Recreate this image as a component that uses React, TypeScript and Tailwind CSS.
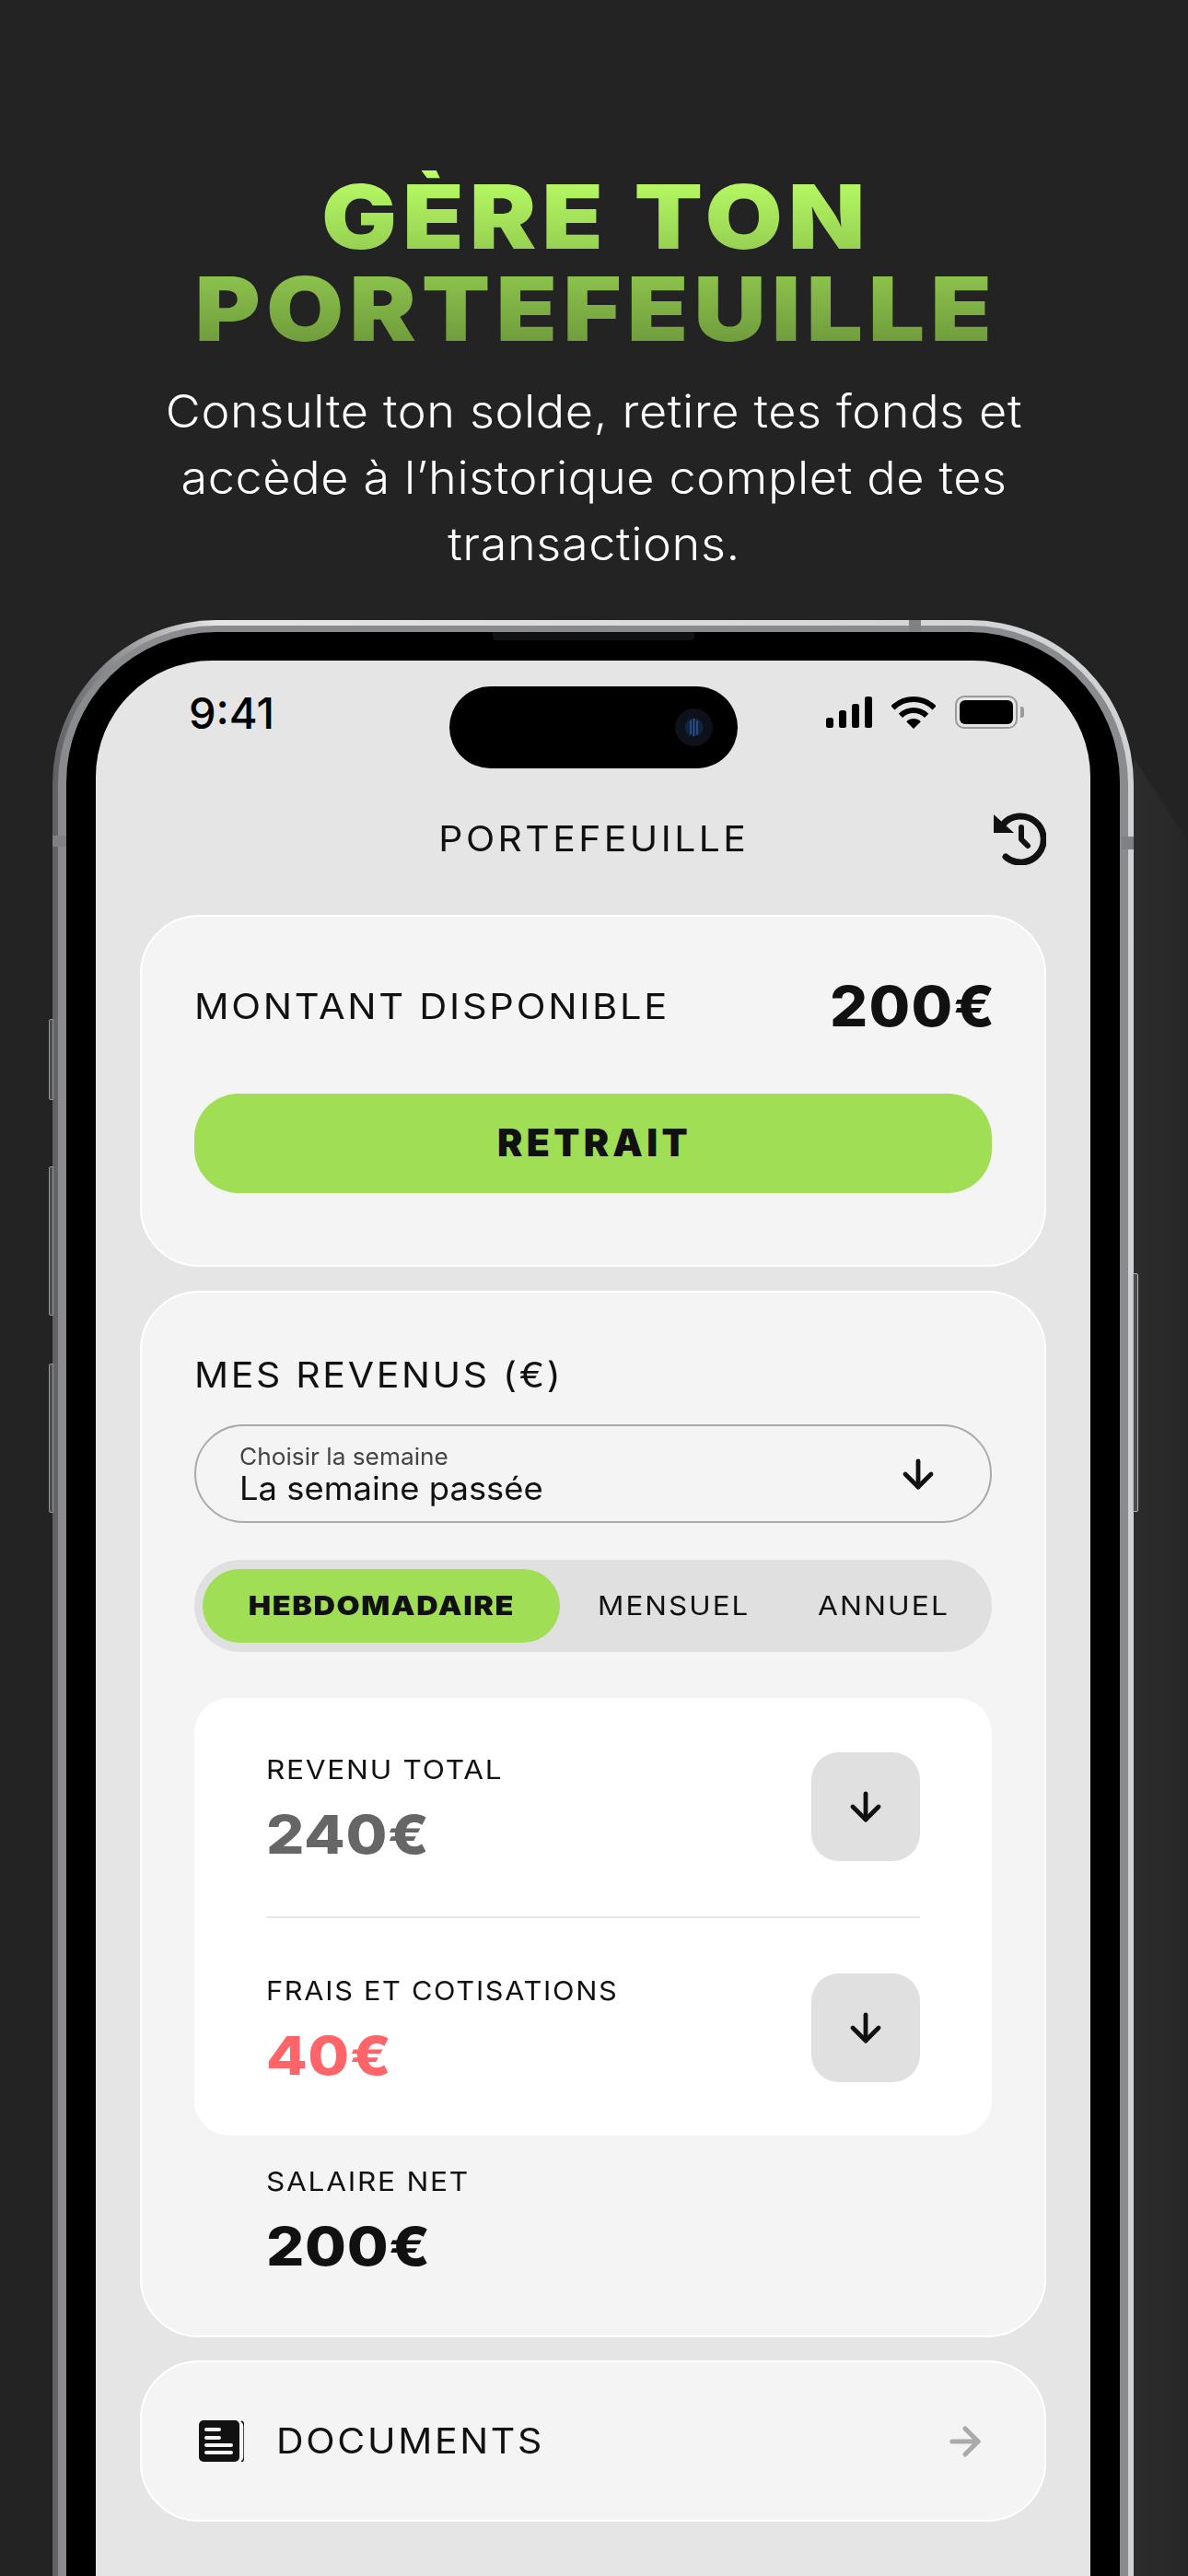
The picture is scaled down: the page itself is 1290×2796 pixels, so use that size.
import { ArrowDown, ArrowRight } from "lucide-react";

function SignalIcon() {
  return (
    <svg width="50" height="34" viewBox="0 0 50 34" fill="#000">
      <rect x="0" y="23" width="8" height="11" rx="2.5" />
      <rect x="14" y="15" width="8" height="19" rx="2.5" />
      <rect x="28" y="8" width="8" height="26" rx="2.5" />
      <rect x="42" y="0" width="8" height="34" rx="2.5" />
    </svg>
  );
}

function WifiIcon() {
  return (
    <svg width="48" height="36" viewBox="0 0 48 36" fill="none" stroke="#000" strokeWidth="6">
      <path d="M1.4 13.4A32 32 0 0 1 46.6 13.4" />
      <path d="M9.9 21.9A20 20 0 0 1 38.1 21.9" />
      <path d="M24 36L16.2 28.2A11 11 0 0 1 31.8 28.2Z" fill="#000" stroke="none" />
    </svg>
  );
}

function BatteryIcon() {
  return (
    <div className="flex items-center">
      <div className="flex h-[36px] w-[68px] items-center justify-center rounded-[10px] border-[2px] border-[#9a9a9a]">
        <div className="h-[26px] w-[58px] rounded-[6px] bg-black" />
      </div>
      <div className="ml-[3px] h-[12px] w-[4px] rounded-r-[3px] bg-[#9a9a9a]" />
    </div>
  );
}

function HistoryIcon() {
  return (
    <svg width="57" height="57" viewBox="0 0 57 57" fill="none" stroke="#111" strokeLinecap="round" strokeLinejoin="round">
      <path d="M10 13A25 25 0 1 1 13 48" strokeWidth="7" />
      <path d="M0 2V22H22Z" fill="#111" stroke="none" />
      <path d="M30 16V29L37 36" strokeWidth="6" />
    </svg>
  );
}

function DocumentIcon() {
  return (
    <svg width="49" height="45" viewBox="0 0 49 45">
      <path d="M46 1c2 1 3 3 3 5v34c0 2-1 4-3 5" fill="none" stroke="#111" strokeWidth="1.5" />
      <rect x="0" y="0" width="44" height="45" rx="5" fill="#111" />
      <rect x="6" y="8" width="18" height="4" rx="2" fill="#f4f4f4" />
      <rect x="6" y="17" width="18" height="4" rx="2" fill="#f4f4f4" />
      <rect x="6" y="25" width="31" height="4" rx="2" fill="#f4f4f4" />
      <rect x="6" y="33" width="31" height="4" rx="2" fill="#f4f4f4" />
    </svg>
  );
}

function AmountRow({ label, amount, color, labelScale }: { label: string; amount: string; color: string; labelScale: string }) {
  return (
    <div className="flex h-[118px] items-start justify-between">
      <div className="flex-1 pt-[4px]">
        <p className={`origin-left text-[29px] leading-[30px] tracking-[0.055em] text-[#111] ${labelScale}`}>{label}</p>
        <p className={`mt-[25px] origin-left scale-x-[1.12] text-[58px] font-extrabold leading-[60px] tracking-[0.01em] ${color}`}>{amount}</p>
      </div>
      <div className="flex h-[118px] w-[118px] items-center justify-center rounded-[30px] bg-[#e0e0e0]">
        <ArrowDown size={48} strokeWidth={2.4} color="#111" />
      </div>
    </div>
  );
}

export default function App() {
  return (
    <div className="flex h-[2796px] w-[1290px] flex-col overflow-hidden bg-[#232323] font-['Inter',sans-serif]">
      {/* Header */}
      <header className="pt-[185px] text-center">
        <h1 className="scale-x-[1.133] bg-linear-to-b from-[#baff66] to-[#6b963a] bg-clip-text pl-[4px] text-[96px] font-black leading-[100px] tracking-[0.055em] text-transparent">
          GÈRE TON
          <br />
          PORTEFEUILLE
        </h1>
        <p className="mt-[26px] scale-x-[1.065] text-[49px] font-light leading-[72px] tracking-[0.012em] text-white">
          Consulte ton solde, retire tes fonds et
          <br />
          accède à l’historique complet de tes
          <br />
          transactions.
        </p>
      </header>

      {/* Phone */}
      <div className="relative ml-[57px] mt-[46px] w-[1174px] flex-1">
        {/* glow on the right of the phone */}
        <div className="absolute bottom-0 left-full top-[150px] w-[59px] bg-linear-to-r from-[#2d2d2d] to-[#262626] [clip-path:polygon(0_0,100%_90px,100%_100%,0_100%)]" />

        {/* side buttons */}
        <div className="absolute left-[-4px] top-[433px] h-[88px] w-[5px] rounded-l-[2px] border border-[#9a9b9e] bg-[#4a4b4e]" />
        <div className="absolute left-[-4px] top-[593px] h-[162px] w-[5px] rounded-l-[2px] border border-[#9a9b9e] bg-[#4a4b4e]" />
        <div className="absolute left-[-4px] top-[807px] h-[162px] w-[5px] rounded-l-[2px] border border-[#9a9b9e] bg-[#4a4b4e]" />
        <div className="absolute right-[-5px] top-[709px] h-[259px] w-[6px] rounded-r-[2px] border border-[#b5b6b9] bg-[#4a4b4e]" />

        <div className="h-full rounded-t-[178px] bg-linear-to-r from-[#5f6064] via-[#e4e4e6] via-15% to-[#cfd1d3] px-[6px] pt-[6px]">
          <div className="h-full rounded-t-[172px] bg-[#8a8b8f] px-[9px] pt-[7px]">
            <div className="relative h-full rounded-t-[163px] bg-black px-[32px] pt-[31px]">
              {/* speaker */}
              <div className="absolute left-[463px] top-0 h-[9px] w-[219px] rounded-b-[4px] bg-[#111]" />

              {/* Screen */}
              <div className="relative h-full rounded-t-[126px] bg-[#e5e5e5] px-[48px] pt-[28px]">
                {/* Dynamic island */}
                <div className="absolute left-[384px] top-[28px] flex h-[89px] w-[313px] items-center justify-end rounded-[45px] bg-black pr-[27px]">
                  <svg width="41" height="41" viewBox="0 0 41 41" fill="none">
                    <circle cx="20.5" cy="20.5" r="20.5" fill="#0d1119" />
                    <circle cx="20.5" cy="20.5" r="10" fill="#12233c" />
                    <path d="M17 13V28M20.5 11V30M24 13V28" stroke="#2c5a96" strokeWidth="1.5" />
                  </svg>
                </div>

                {/* Status bar */}
                <div className="flex h-[89px] items-start justify-between pl-[53px] pr-[24px]">
                  <span className="text-[47px] font-medium leading-[58px] text-black">9:41</span>
                  <div className="flex items-center gap-[21px] pt-[10px]">
                    <SignalIcon />
                    <WifiIcon />
                    <BatteryIcon />
                  </div>
                </div>

                {/* Title */}
                <div className="mt-[44px] flex h-[64px] items-center justify-between">
                  <div className="h-[57px] w-[57px]" />
                  <h2 className="scale-x-[1.075] pl-[2px] text-[38px] leading-[64px] tracking-[0.085em] text-[#111]">PORTEFEUILLE</h2>
                  <HistoryIcon />
                </div>

                {/* Balance */}
                <section className="mt-[51px] rounded-[64px] border-[2px] border-white bg-[#f4f4f4] px-[57px] pb-[78px] pt-[67px]">
                  <div className="flex h-[60px] items-center justify-between">
                    <span className="origin-left scale-x-[1.095] text-[38px] tracking-[0.065em] text-[#111]">MONTANT DISPONIBLE</span>
                    <span className="mr-[-5px] origin-right scale-x-[1.077] text-[60px] font-extrabold tracking-[0.02em] text-[#111]">200€</span>
                  </div>
                  <button className="mt-[65px] flex h-[108px] w-full items-center justify-center rounded-[48px] bg-[#a0de56] pl-[3px] text-[41px] font-black tracking-[0.105em] text-[#111]">
                    RETRAIT
                  </button>
                </section>

                {/* Revenue */}
                <section className="mt-[26px] rounded-[64px] border-[2px] border-white bg-[#f4f4f4] px-[57px] pb-[67px] pt-[69px]">
                  <h3 className="origin-left scale-x-[1.08] text-[38px] leading-[40px] tracking-[0.065em] text-[#111]">MES REVENUS (€)</h3>

                  <div className="mt-[34px] flex h-[107px] items-center justify-between rounded-[54px] border-[2px] border-[#aaaaaa] pl-[47px] pr-[54px]">
                    <div className="flex-1">
                      <p className="origin-left scale-x-[1.05] text-[25px] leading-[30px] text-[#444]">Choisir la semaine</p>
                      <p className="origin-left scale-x-[1.04] text-[35px] leading-[38px] text-[#111]">La semaine passée</p>
                    </div>
                    <ArrowDown size={48} strokeWidth={2.4} color="#111" />
                  </div>

                  <div className="mt-[40px] flex h-[100px] items-center rounded-full bg-[#e0e0e0] pl-[9px] text-[29px] text-[#111]">
                    <div className="flex h-[80px] w-[388px] items-center justify-center rounded-full bg-[#a0de56] font-black tracking-[0.05em]">
                      <span className="inline-block scale-x-[1.118]">HEBDOMADAIRE</span>
                    </div>
                    <span className="ml-[41px] origin-left scale-x-[1.083] tracking-[0.065em]">MENSUEL</span>
                    <span className="ml-[86px] origin-left scale-x-[1.097] tracking-[0.065em]">ANNUEL</span>
                  </div>

                  <div className="mt-[50px] rounded-[38px] bg-white pb-[58px] pl-[78px] pr-[78px] pt-[59px]">
                    <AmountRow label="REVENU TOTAL" amount="240€" color="text-[#666666]" labelScale="scale-x-[1.09]" />
                    <div className="my-[60px] ml-[1px] h-[2px] bg-[#e6e6e6]" />
                    <AmountRow label="FRAIS ET COTISATIONS" amount="40€" color="text-[#ff6468]" labelScale="scale-x-[1.06]" />
                  </div>

                  <div className="mt-[35px] pl-[78px]">
                    <p className="origin-left scale-x-[1.09] text-[29px] leading-[30px] tracking-[0.055em] text-[#111]">SALAIRE NET</p>
                    <p className="mt-[25px] origin-left scale-x-[1.12] text-[58px] font-extrabold leading-[60px] tracking-[0.01em] text-[#111]">200€</p>
                  </div>
                </section>

                {/* Documents */}
                <section className="mt-[25px] flex h-[175px] items-center justify-between rounded-[64px] border-[2px] border-white bg-[#f4f4f4] pl-[62px] pr-[62px]">
                  <div className="flex items-center gap-[35px]">
                    <DocumentIcon />
                    <span className="origin-left scale-x-[1.08] text-[38px] tracking-[0.065em] text-[#111]">DOCUMENTS</span>
                  </div>
                  <ArrowRight size={48} strokeWidth={2.6} color="#aaaaaa" />
                </section>
              </div>
            </div>
          </div>
        </div>

        {/* antenna bands */}
        <div className="absolute left-[930px] top-0 h-[13px] w-[13px] bg-[#808185]" />
        <div className="absolute left-0 top-[234px] h-[12px] w-[15px] bg-[#808185]" />
        <div className="absolute right-0 top-[235px] h-[14px] w-[13px] bg-[#808185]" />
      </div>
    </div>
  );
}
